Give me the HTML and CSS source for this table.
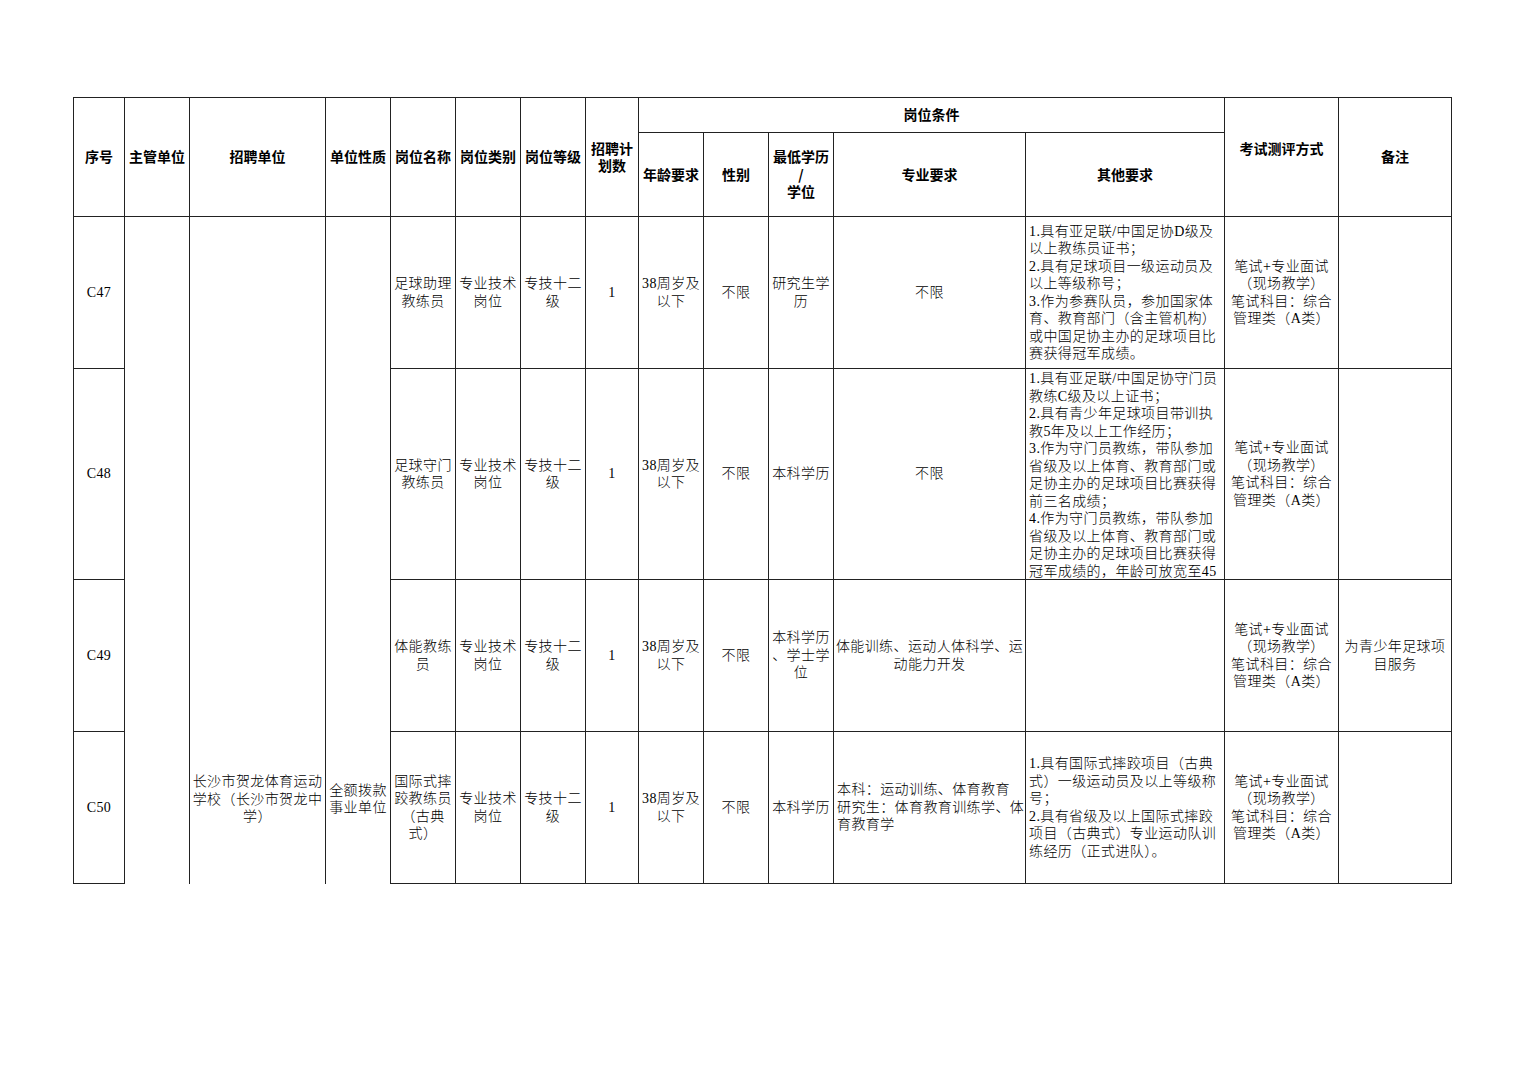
FILE: index.html
```html
<!DOCTYPE html>
<html lang="zh-CN">
<head>
<meta charset="utf-8">
<title>招聘岗位表</title>
<link rel="stylesheet" href="styles.css">
</head>
<body>
<div class="page">
<table class="sheet">
  <colgroup>
    <col class="w51"><col class="w65"><col class="w136"><col class="w65"><col class="w65"><col class="w65"><col class="w65"><col class="w53"><col class="w65"><col class="w65"><col class="w65"><col class="w192"><col class="w199"><col class="w114"><col class="w113">
  </colgroup>
  <thead>
    <tr class="h1">
      <th rowspan="2">序号</th>
      <th rowspan="2">主管单位</th>
      <th rowspan="2">招聘单位</th>
      <th rowspan="2">单位性质</th>
      <th rowspan="2">岗位名称</th>
      <th rowspan="2">岗位类别</th>
      <th rowspan="2">岗位等级</th>
      <th rowspan="2">招聘计<br>划数</th>
      <th colspan="5">岗位条件</th>
      <th rowspan="2" class="trail">考试测评方式</th>
      <th rowspan="2">备注</th>
    </tr>
    <tr class="h2">
      <th>年龄要求</th>
      <th>性别</th>
      <th>最低学历<br>/<br>学位</th>
      <th>专业要求</th>
      <th>其他要求</th>
    </tr>
  </thead>
  <tbody>
    <tr class="r152">
      <td>C47</td>
      <td rowspan="4" class="open"></td>
      <td rowspan="4" class="open unit">长沙市贺龙体育运动<br>学校（长沙市贺龙中<br>学）</td>
      <td rowspan="4" class="open nature">全额拨款<br>事业单位</td>
      <td>足球助理<br>教练员</td>
      <td>专业技术<br>岗位</td>
      <td>专技十二<br>级</td>
      <td>1</td>
      <td>38周岁及<br>以下</td>
      <td>不限</td>
      <td>研究生学<br>历</td>
      <td>不限</td>
      <td class="left">1.具有亚足联/中国足协D级及<br>以上教练员证书；<br>2.具有足球项目一级运动员及<br>以上等级称号；<br>3.作为参赛队员，参加国家体<br>育、教育部门（含主管机构）<br>或中国足协主办的足球项目比<br>赛获得冠军成绩。</td>
      <td>笔试+专业面试<br>（现场教学）<br>笔试科目：综合<br>管理类（A类）</td>
      <td></td>
    </tr>
    <tr class="r211">
      <td>C48</td>
      <td>足球守门<br>教练员</td>
      <td>专业技术<br>岗位</td>
      <td>专技十二<br>级</td>
      <td>1</td>
      <td>38周岁及<br>以下</td>
      <td>不限</td>
      <td>本科学历</td>
      <td>不限</td>
      <td class="left top"><div class="clip">1.具有亚足联/中国足协守门员<br>教练C级及以上证书；<br>2.具有青少年足球项目带训执<br>教5年及以上工作经历；<br>3.作为守门员教练，带队参加<br>省级及以上体育、教育部门或<br>足协主办的足球项目比赛获得<br>前三名成绩；<br>4.作为守门员教练，带队参加<br>省级及以上体育、教育部门或<br>足协主办的足球项目比赛获得<br>冠军成绩的，年龄可放宽至45<br>周岁。</div></td>
      <td>笔试+专业面试<br>（现场教学）<br>笔试科目：综合<br>管理类（A类）</td>
      <td></td>
    </tr>
    <tr class="r152">
      <td>C49</td>
      <td>体能教练<br>员</td>
      <td>专业技术<br>岗位</td>
      <td>专技十二<br>级</td>
      <td>1</td>
      <td>38周岁及<br>以下</td>
      <td>不限</td>
      <td>本科学历<br>、学士学<br>位</td>
      <td>体能训练、运动人体科学、运<br>动能力开发</td>
      <td></td>
      <td>笔试+专业面试<br>（现场教学）<br>笔试科目：综合<br>管理类（A类）</td>
      <td>为青少年足球项<br>目服务</td>
    </tr>
    <tr class="r152">
      <td>C50</td>
      <td>国际式摔<br>跤教练员<br>（古典<br>式）</td>
      <td>专业技术<br>岗位</td>
      <td>专技十二<br>级</td>
      <td>1</td>
      <td>38周岁及<br>以下</td>
      <td>不限</td>
      <td>本科学历</td>
      <td class="left">本科：运动训练、体育教育<br>研究生：体育教育训练学、体<br>育教育学</td>
      <td class="left">1.具有国际式摔跤项目（古典<br>式）一级运动员及以上等级称<br>号；<br>2.具有省级及以上国际式摔跤<br>项目（古典式）专业运动队训<br>练经历（正式进队）。</td>
      <td>笔试+专业面试<br>（现场教学）<br>笔试科目：综合<br>管理类（A类）</td>
      <td></td>
    </tr>
  </tbody>
</table>
</div>
</body>
</html>
```
FILE: styles.css
```css
html, body {
  margin: 0;
  padding: 0;
  background: #ffffff;
}
.page {
  padding: 97px 0 0 73px;
}
.sheet {
  border-collapse: collapse;
  table-layout: fixed;
  width: 1379px;
  color: #000;
  font-family: "Liberation Serif", "Noto Sans CJK SC", serif;
  font-size: 14px;
  font-weight: 300;
  letter-spacing: 0.4px;
  line-height: 17.5px;
}
.w51 { width: 51px; }
.w53 { width: 53px; }
.w65 { width: 65px; }
.w113 { width: 113px; }
.w114 { width: 114px; }
.w136 { width: 136px; }
.w192 { width: 192px; }
.w199 { width: 199px; }
.sheet th,
.sheet td {
  border: 1px solid #222;
  padding: 0 1px;
  text-align: center;
  vertical-align: middle;
  white-space: nowrap;
  overflow: hidden;
}
.sheet th {
  font-family: "Noto Sans CJK SC", sans-serif;
  font-weight: 700;
  letter-spacing: 0;
  font-size: 14px;
  color: #000;
}
.h1 { height: 35px; }
.h2 { height: 84px; }
.r152 { height: 152px; }
.r211 { height: 211px; }
.sheet .trail { padding-bottom: 17px; }
.sheet .left { text-align: left; padding-left: 3px; }
.sheet .top { vertical-align: top; padding-top: 1px; }
.clip {
  height: 209px;
  overflow: hidden;
}
.sheet .open { border-bottom-style: hidden; }
.sheet .unit { vertical-align: bottom; padding-bottom: 58px; }
.sheet .nature { vertical-align: bottom; padding-bottom: 67px; }
```
